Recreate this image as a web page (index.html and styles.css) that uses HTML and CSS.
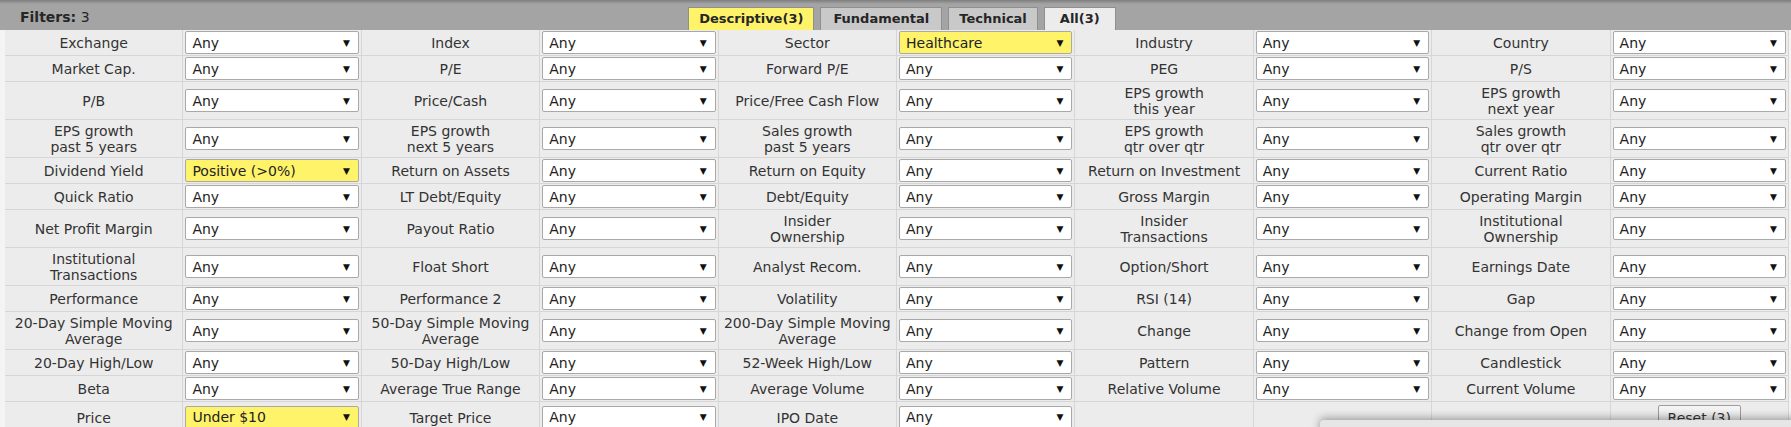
FILE: index.html
```html
<!DOCTYPE html>
<html lang="en">
<head>
    <meta charset="UTF-8">
    <title>Screener Filters</title>
    <link rel="stylesheet" href="styles.css">
</head>
<body>

    <div class="screener">
        <div class="filters-head">
            <div class="filters-count"><strong>Filters:</strong> 3</div>
            <div class="tabs">
                <span class="tab tab-active">Descriptive(3)</span>
                <span class="tab">Fundamental</span>
                <span class="tab tab-tech">Technical</span>
                <span class="tab tab-all">All(3)</span>
            </div>
            <div></div>
        </div>
        <div class="filters-grid" id="filters-grid"></div>
    </div>

    <!-- floating bar at the bottom of the window -->
    <div class="bottom-bar"></div>

    <script>
        const rows = [
            [['Exchange'], ['Index'], ['Sector', 'Healthcare'], ['Industry'], ['Country']],
            [['Market Cap.'], ['P/E'], ['Forward P/E'], ['PEG'], ['P/S']],
            [['P/B'], ['Price/Cash'], ['Price/Free Cash Flow'], ['EPS growth<br>this year'], ['EPS growth<br>next year']],
            [['EPS growth<br>past 5 years'], ['EPS growth<br>next 5 years'], ['Sales growth<br>past 5 years'], ['EPS growth<br>qtr over qtr'], ['Sales growth<br>qtr over qtr']],
            [['Dividend Yield', 'Positive (>0%)'], ['Return on Assets'], ['Return on Equity'], ['Return on Investment'], ['Current Ratio']],
            [['Quick Ratio'], ['LT Debt/Equity'], ['Debt/Equity'], ['Gross Margin'], ['Operating Margin']],
            [['Net Profit Margin'], ['Payout Ratio'], ['Insider<br>Ownership'], ['Insider<br>Transactions'], ['Institutional<br>Ownership']],
            [['Institutional<br>Transactions'], ['Float Short'], ['Analyst Recom.'], ['Option/Short'], ['Earnings Date']],
            [['Performance'], ['Performance 2'], ['Volatility'], ['RSI (14)'], ['Gap']],
            [['20-Day Simple Moving<br>Average'], ['50-Day Simple Moving<br>Average'], ['200-Day Simple Moving<br>Average'], ['Change'], ['Change from Open']],
            [['20-Day High/Low'], ['50-Day High/Low'], ['52-Week High/Low'], ['Pattern'], ['Candlestick']],
            [['Beta'], ['Average True Range'], ['Average Volume'], ['Relative Volume'], ['Current Volume']],
            [['Price', 'Under $10'], ['Target Price'], ['IPO Date'], null, 'reset']
        ];

        function buildGrid() {
            const grid = document.getElementById('filters-grid');
            let html = '';
            rows.forEach(row => {
                row.forEach(item => {
                    if (item === null) {
                        html += '<div class="cell"></div><div class="cell"></div>';
                    } else if (item === 'reset') {
                        html += '<div class="cell"></div><div class="cell cell-reset"><button class="reset-btn">Reset (3)</button></div>';
                    } else {
                        const value = item[1] || 'Any';
                        const hl = item[1] ? ' select-on' : '';
                        html += '<div class="cell cell-label">' + item[0] + '</div>';
                        html += '<div class="cell cell-select"><div class="select' + hl + '"><span>' + value + '</span><span class="arrow">&#9660;</span></div></div>';
                    }
                });
            });
            grid.innerHTML = html;
        }

        buildGrid();
    </script>

</body>
</html>
```

FILE: styles.css
```css
body {
    margin: 0;
    padding: 0;
    background-color: #f4f4f4;
    font-family: 'DejaVu Sans', Verdana, sans-serif;
    font-size: 14px;
    color: #333333;
    overflow: hidden;
}

.screener {
    margin: 0 2px 0 5px;
}

.filters-head {
    display: grid;
    grid-template-columns: 1fr auto 1fr;
    align-items: end;
    height: 30px;
    background: linear-gradient(to bottom, #7e7e7e 0, #a4a4a4 4px, #a4a4a4 100%);
    margin-left: -5px;
    padding-left: 5px;
    margin-right: -2px;
}

.filters-count {
    align-self: center;
    padding-left: 15px;
    padding-top: 3px;
    color: #262626;
}

.tabs {
    display: flex;
    gap: 6px;
    margin-left: 8px;
}

.tab {
    height: 22px;
    line-height: 22px;
    padding: 0 12px;
    border: 1px solid #8f8f8f;
    border-bottom: none;
    background-color: #c9c9c9;
    font-size: 13px;
    font-weight: bold;
    color: #262626;
}

.tab-active {
    background-color: #fff36a;
    padding: 0 10px;
}

.tab-tech {
    padding: 0 10px;
}

.tab-all {
    background-color: #ececec;
    padding: 0 15px;
}

.filters-grid {
    display: grid;
    grid-template-columns: repeat(10, 1fr);
    background-color: #ececec;
}

.cell {
    display: flex;
    align-items: center;
    justify-content: center;
    min-height: 23px;
    padding: 1px 2px;
    border-right: 1px solid #d6d6d6;
    border-bottom: 1px solid #d6d6d6;
}

.cell-label {
    min-height: 0;
    text-align: center;
    line-height: 16px;
    padding-top: 3px;
    padding-bottom: 2px;
}

.select {
    display: flex;
    align-items: center;
    justify-content: space-between;
    box-sizing: border-box;
    width: 100%;
    height: 23px;
    padding: 0 8px 0 6px;
    background-color: #ffffff;
    border: 1px solid #a9a9a9;
    border-radius: 2px;
    color: #222222;
}

.select-on {
    background-color: #fff36a;
}

.arrow {
    font-size: 9px;
    color: #111111;
}

.cell-reset {
    align-items: flex-start;
    padding-top: 3px;
}

.reset-btn {
    width: 83px;
    height: 26px;
    padding: 0;
    font-family: 'DejaVu Sans', Verdana, sans-serif;
    font-size: 14px;
    color: #333333;
    background: linear-gradient(to bottom, #f6f6f6, #dddddd);
    border: 1px solid #9c9c9c;
    border-radius: 2px;
}

.bottom-bar {
    position: absolute;
    left: 1320px;
    top: 420px;
    width: 480px;
    height: 40px;
    background-color: #e6e6e6;
    border-radius: 4px 0 0 0;
    box-shadow: 0 -2px 8px rgba(0, 0, 0, 0.35);
}
```
